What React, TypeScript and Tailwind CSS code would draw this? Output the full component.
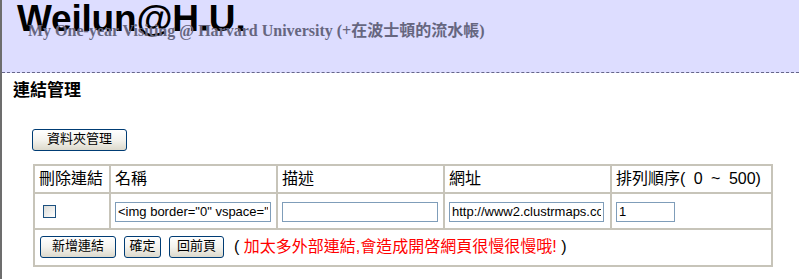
import React from 'react';

const sans = "font-['Liberation_Sans','Noto_Sans_CJK_TC',sans-serif]";

// XP 風格按鈕
const XpButton = ({ label, w }: { label: string; w: string }) => (
  <button
    className={`${w} h-[22px] rounded-[3px] border border-[#003c74] bg-gradient-to-b from-white via-[#f4f3ee] to-[#dcd9cc] text-[13px] leading-[18px] text-black pb-[3px] ${sans}`}
  >
    {label}
  </button>
);

const TextBox = ({ value, w }: { value: string; w: string }) => (
  <input
    readOnly
    value={value}
    className={`${w} h-[20px] border border-[#7f9db9] bg-white px-[2px] text-[13px] text-black outline-none ${sans}`}
  />
);

const cell = 'border-2 border-[#c7c4b9] px-[4px] align-middle';

export default function App() {
  return (
    <div className={`min-h-[279px] border-l-2 border-[#6d6d6d] bg-white ${sans}`}>
      {/* 標題區 */}
      <div className="h-[73px] bg-[#ddddff] border-b border-dashed border-[#66668a]">
        <div className="pl-[15px] pt-[2px] text-[37px] font-bold leading-[34px] tracking-[-0.2px] text-black font-['Liberation_Sans',sans-serif]">
          Weilun@H.U.
        </div>
        <div className="mt-[-13px] pl-[26px] text-[16px] font-bold leading-[16px] text-[#66667f] font-['Liberation_Serif','Noto_Sans_CJK_TC',serif]">
          My One-year Visiting @ Harvard University (+在波士頓的流水帳)
        </div>
      </div>

      <div className="pl-[11px] pt-[9px] text-[17px] font-bold leading-[17px] text-black">連結管理</div>

      <div className="pl-[30px] pt-[27px]">
        <XpButton label="資料夾管理" w="w-[95px]" />
      </div>

      <div className="pl-[31px] pt-[13px]">
        <table className="table-fixed border-collapse border-2 border-[#bfbbb0] w-[738px] text-[16px] text-black">
          <colgroup>
            <col className="w-[76px]" />
            <col className="w-[167px]" />
            <col className="w-[167px]" />
            <col className="w-[167px]" />
            <col className="w-[161px]" />
          </colgroup>
          <tbody>
            <tr className="h-[28px]">
              <td className={`${cell} whitespace-nowrap`}>刪除連結</td>
              <td className={cell}>名稱</td>
              <td className={cell}>描述</td>
              <td className={cell}>網址</td>
              <td className={`${cell} whitespace-nowrap [word-spacing:4px]`}>排列順序( 0 ~ 500)</td>
            </tr>
            <tr className="h-[36px]">
              <td className={`${cell} pl-[8px]`}>
                <span className="block w-[13px] h-[13px] border border-[#1c5180] bg-gradient-to-br from-[#dcdcd7] to-white" />
              </td>
              <td className={cell}>
                <TextBox value={'<img border="0" vspace="" hspace="0"'} w="w-[156px]" />
              </td>
              <td className={cell}>
                <TextBox value="" w="w-[156px]" />
              </td>
              <td className={cell}>
                <TextBox value="http://www2.clustrmaps.com/counter" w="w-[155px]" />
              </td>
              <td className={cell}>
                <TextBox value="1" w="w-[59px]" />
              </td>
            </tr>
            <tr className="h-[37px]">
              <td colSpan={5} className={`${cell} pl-[5px]`}>
                <div className="flex items-center gap-[8px] pb-[2px]">
                  <XpButton label="新增連結" w="w-[76px]" />
                  <XpButton label="確定" w="w-[37px]" />
                  <XpButton label="回前頁" w="w-[55px]" />
                  <span className="ml-[2px] whitespace-nowrap">
                    ( <span className="text-[#ff0000]">加太多外部連結,會造成開啓網頁很慢很慢哦!</span> )
                  </span>
                </div>
              </td>
            </tr>
          </tbody>
        </table>
      </div>
    </div>
  );
}
